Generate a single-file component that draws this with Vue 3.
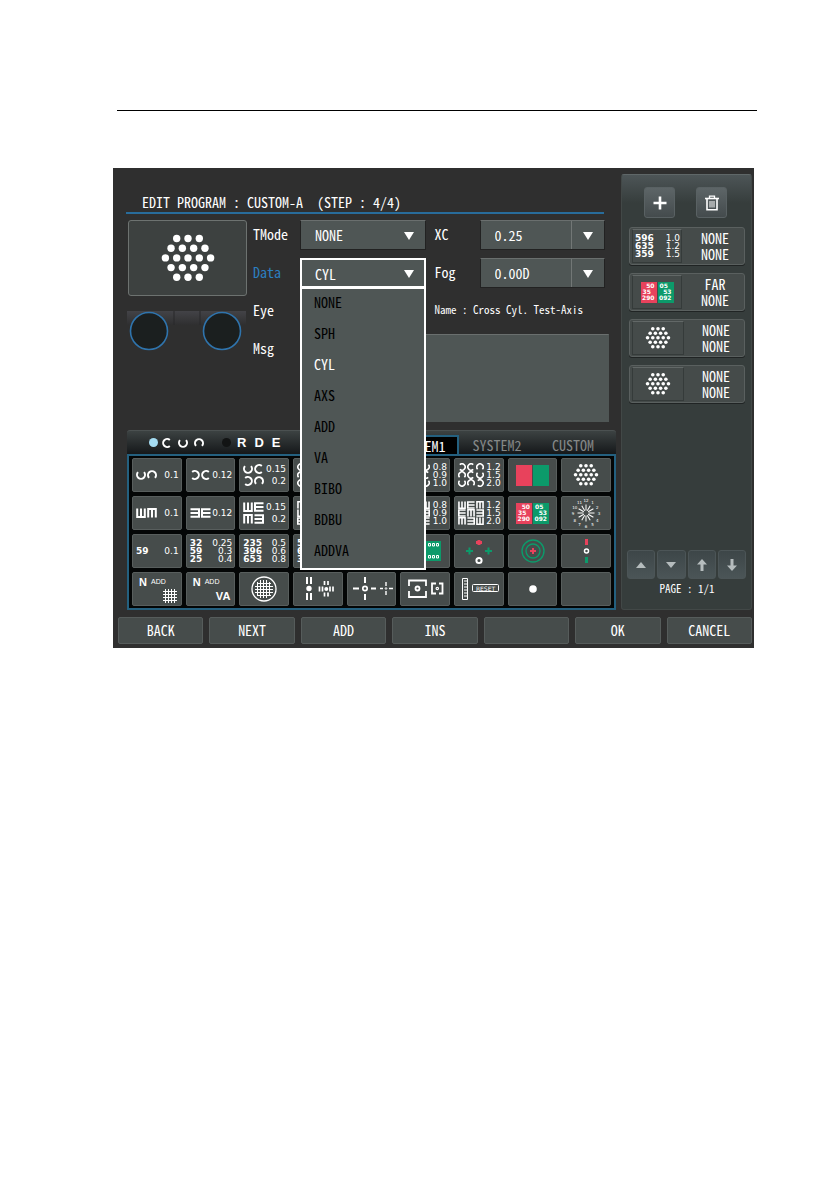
<template>
  <div class="page">
    <hr class="page-rule" />
    <main class="device">
      <div class="device-body">
        <section class="editor">
          <h1 class="title">EDIT PROGRAM : CUSTOM-A&nbsp; (STEP : 4/4)</h1>

          <div class="setup">
            <div class="preview-col">
              <div class="preview">
                <svg viewBox="0 0 54 48" class="preview-dots" aria-hidden="true">
                  <circle v-for="(d, i) in dots" :key="i" :cx="d.x" :cy="d.y" r="3.7" fill="#fff" />
                </svg>
              </div>
              <svg class="lenses" viewBox="0 0 120 42" aria-hidden="true">
                <defs>
                  <linearGradient id="band" x1="0" y1="0" x2="0" y2="1">
                    <stop offset="0" stop-color="#434347" />
                    <stop offset="1" stop-color="#2f2f30" />
                  </linearGradient>
                </defs>
                <rect x="0" y="1" width="119" height="14" fill="url(#band)" />
                <path d="M47 1v14M73 1v14" stroke="#29292a" />
                <circle cx="22" cy="21" r="18.5" fill="#1b1f1f" stroke="#2f74ad" stroke-width="1.6" />
                <circle cx="95" cy="21" r="18.5" fill="#1b1f1f" stroke="#2f74ad" stroke-width="1.6" />
              </svg>
            </div>

            <form class="fields" @submit.prevent>
              <label for="tmode">TMode</label>
              <div class="combo">
                <select id="tmode" v-model="tmode">
                  <option>NONE</option>
                </select>
                <svg class="caret" viewBox="0 0 10 8"><path d="M0 0h10L5 8z" /></svg>
              </div>
              <label for="xc" class="second">XC</label>
              <div class="combo split">
                <select id="xc" v-model="xc">
                  <option>0.25</option>
                </select>
                <svg class="caret" viewBox="0 0 10 8"><path d="M0 0h10L5 8z" /></svg>
              </div>

              <label for="data" class="current">Data</label>
              <div class="combo open">
                <select id="data" v-model="dataField">
                  <option v-for="o in dataOptions" :key="o">{{ o }}</option>
                </select>
                <svg class="caret" viewBox="0 0 10 8"><path d="M0 0h10L5 8z" /></svg>
                <ul class="options" role="listbox" aria-label="Data">
                  <li
                    v-for="o in dataOptions"
                    :key="o"
                    role="option"
                    :aria-selected="o === dataField"
                    :class="{ selected: o === dataField }"
                    @click="dataField = o"
                  >
                    {{ o }}
                  </li>
                </ul>
              </div>
              <label for="fog" class="second">Fog</label>
              <div class="combo split">
                <select id="fog" v-model="fog">
                  <option>0.00D</option>
                </select>
                <svg class="caret" viewBox="0 0 10 8"><path d="M0 0h10L5 8z" /></svg>
              </div>

              <span class="field-name">Eye</span>
              <p class="test-name">Name : Cross Cyl. Test-Axis</p>

              <label for="msg" class="msg-label">Msg</label>
              <textarea id="msg" v-model="message"></textarea>
            </form>
          </div>

          <div class="tabs">
            <div class="modes">
              <label class="mode">
                <input v-model="mode" type="radio" name="mode" value="landolt" aria-label="Landolt" />
                <svg
                  v-for="g in ['r', 'u', 'd']"
                  :key="g"
                  class="mode-glyph"
                  viewBox="0 0 10 10"
                  aria-hidden="true"
                >
                  <path :d="ringPath" :transform="turn(g)" class="ring" />
                </svg>
              </label>
              <label class="mode letters">
                <input v-model="mode" type="radio" name="mode" value="letters" />
                <span>R</span><span>D</span><span>E</span>
              </label>
            </div>
            <button
              v-for="t in tabs"
              :key="t"
              type="button"
              class="tab"
              :class="{ active: t === activeTab }"
              @click="activeTab = t"
            >
              {{ t }}
            </button>
          </div>

          <div class="charts">
            <button v-for="(c, i) in charts" :key="i" type="button" class="chart">
              <span v-if="c.rows" class="lines" :class="'lines-' + c.rows.length">
                <span v-for="(r, j) in c.rows" :key="j" class="line">
                  <b v-if="c.set === 'num'">{{ r[0] }}</b>
                  <span v-else class="glyphs">
                    <svg v-for="(g, k) in r[0]" :key="k" viewBox="0 0 10 10" aria-hidden="true">
                      <path
                        :d="c.set === 'ring' ? ringPath : forkPath"
                        :transform="turn(g)"
                        class="ring"
                      />
                    </svg>
                  </span>
                  <span v-if="r[1]" class="acuity">{{ r[1] }}</span>
                </span>
              </span>

              <span v-else-if="c.kind === 'near-grid' || c.kind === 'near-va'" class="near">
                <b>N</b><small>ADD</small>
                <svg v-if="c.kind === 'near-grid'" class="near-mark" viewBox="0 0 14 14">
                  <path d="M2.500 0v14M5.500 0v14M8.500 0v14M11.500 0v14M0 2.500h14M0 5.500h14M0 8.500h14M0 11.500h14" stroke="#fff" />
                </svg>
                <b v-else class="near-mark va">VA</b>
              </span>

              <svg v-else-if="c.kind === 'dots'" class="art" viewBox="-27 -12 108 73">
                <circle v-for="(d, k) in dots" :key="k" :cx="d.x" :cy="d.y" r="3.9" fill="#fff" />
              </svg>

              <span v-else-if="c.kind === 'duo' || c.kind === 'duo-num'" class="duo">
                <span class="red"><i v-for="n in c.left" :key="n">{{ n }}</i></span>
                <span class="green"><i v-for="n in c.right" :key="n">{{ n }}</i></span>
              </span>

              <svg v-else-if="c.kind" class="art" viewBox="0 0 50 34">
                <g v-if="c.kind === 'clock'" stroke="#fff" fill="none">
                  <path
                    v-for="n in 12"
                    :key="n"
                    d="M25 8.500V14.500"
                    :transform="`rotate(${n * 30} 25 17)`"
                    stroke-width="1"
                  />
                  <text
                    v-for="n in 12"
                    :key="'t' + n"
                    :x="25 + 13 * Math.sin((n * Math.PI) / 6)"
                    :y="19 - 13 * Math.cos((n * Math.PI) / 6)"
                    class="hour"
                  >
                    {{ n }}
                  </text>
                </g>
                <g v-else-if="c.kind === 'duo-rows'">
                  <path d="M8 7h33v20H8z" fill="#0c9a6a" />
                  <path d="M8 7h16v20H8z" fill="#e8425c" />
                  <g fill="none" stroke="#fff">
                    <path d="M28.500 9.500h2v2.500h-2zM32.500 9.500h2v2.500h-2zM36.500 9.500h2v2.500h-2z" />
                    <path d="M28.500 21.500h2v2.500h-2zM32.500 21.500h2v2.500h-2zM36.500 21.500h2v2.500h-2z" />
                  </g>
                </g>
                <g v-else-if="c.kind === 'worth'">
                  <path d="M22 8.500h6M25 6v5" stroke="#e8425c" stroke-width="3" />
                  <path d="M12 17h7M15.500 13.500v7M31 17h7M34.500 13.500v7" stroke="#0c9a6a" stroke-width="2" />
                  <circle cx="25" cy="26.500" r="2.600" fill="none" stroke="#fff" stroke-width="2" />
                </g>
                <g v-else-if="c.kind === 'rings'" fill="none" stroke="#0c9a6a" stroke-width="1.400">
                  <circle cx="25" cy="17" r="11" />
                  <circle cx="25" cy="17" r="7" />
                  <path d="M22 17h6M25 14v6" stroke="#e8425c" stroke-width="2" />
                </g>
                <g v-else-if="c.kind === 'column'">
                  <path d="M25.500 5v6" stroke="#e8425c" stroke-width="3" />
                  <circle cx="25.500" cy="17" r="2" fill="none" stroke="#fff" stroke-width="1.500" />
                  <path d="M25.500 23v6" stroke="#0c9a6a" stroke-width="3" />
                </g>
                <g v-else-if="c.kind === 'amsler'" fill="none" stroke="#fff">
                  <circle cx="25" cy="17" r="12" stroke-width="1.300" />
                  <path
                    d="M18.500 10v14M21.500 8v18M24.500 8v18M27.500 8v18M30.500 10v14M18 11.500h14M16 14.500h18M16 17.500h18M16 20.500h18M18 23.500h14"
                    stroke-width="1"
                  />
                </g>
                <g v-else-if="c.kind === 'aniso'" stroke="#fff" stroke-width="2">
                  <path d="M14 5v7M18 5v7M14 21v7M18 21v7" />
                  <circle cx="16" cy="16.500" r="2.700" fill="#fff" stroke="none" />
                  <path
                    d="M26.500 14.500v5M29.500 14.500v5M37 14.500v5M40 14.500v5M31.500 9v4M35 9v4M31.500 20.500v4M35 20.500v4"
                    stroke-width="1.700"
                  />
                  <circle cx="33.300" cy="17" r="2" fill="#fff" stroke="none" />
                </g>
                <g v-else-if="c.kind === 'cross'" fill="none" stroke="#fff" stroke-width="2">
                  <path d="M6 16.500h6M24 16.500h5M18 5v6M18 22v6" />
                  <circle cx="18" cy="16.500" r="2.200" stroke-width="1.700" />
                  <path d="M33 16.500h3M42 16.500h4M39 10v4M39 19v4" stroke-width="1.400" />
                  <circle cx="39" cy="16.500" r=".8" stroke-width="1" />
                </g>
                <g v-else-if="c.kind === 'brackets'" fill="none" stroke="#fff" stroke-width="1.800">
                  <path d="M9 14V8.500H26V14M9 19v6h17v-6" />
                  <circle cx="17.500" cy="16.500" r="2" />
                  <path d="M36 11.500h-4v10h4M39 11.500h3.500v10H39" />
                  <circle cx="37.300" cy="16.500" r="1.200" stroke-width="1.200" />
                </g>
                <g v-else-if="c.kind === 'reset'" fill="none" stroke="#fff">
                  <path d="M8.500 6.500h5v21h-5z" />
                  <path d="M10 9h3M10 12h3M10 15h3M10 18h3M10 21h3M10 24h3" />
                  <rect x="18.500" y="12.500" width="26" height="7" rx="1" />
                  <text x="31.500" y="18.500" class="reset-text">RESET</text>
                </g>
                <circle v-else-if="c.kind === 'spot'" cx="25" cy="17" r="3.800" fill="#fff" />
              </svg>
            </button>
          </div>
        </section>

        <aside class="steps">
          <div class="step-tools">
            <button type="button" aria-label="Add step">
              <svg viewBox="0 0 16 16"><path d="M8 1.500v13M1.500 8h13" stroke="#fff" stroke-width="2.600" /></svg>
            </button>
            <button type="button" aria-label="Delete step">
              <svg viewBox="0 0 16 16" fill="none" stroke="#fff">
                <path d="M1 3.500h14" stroke-width="1.600" />
                <path d="M5.500 3V1.200h5V3" stroke-width="1.300" />
                <path d="M3 4v10.800h10V4" stroke-width="1.600" />
                <path d="M6 6v6.500M8 6v6.500M10 6v6.500" />
              </svg>
            </button>
          </div>

          <button v-for="(s, i) in steps" :key="i" type="button" class="step">
            <span class="thumb">
              <span v-if="s.kind === 'numbers'" class="lines lines-3">
                <span v-for="r in s.rows" :key="r[0]" class="line">
                  <b>{{ r[0] }}</b><span class="acuity">{{ r[1] }}</span>
                </span>
              </span>
              <span v-else-if="s.kind === 'duo-num'" class="duo">
                <span class="red"><i v-for="n in s.left" :key="n">{{ n }}</i></span>
                <span class="green"><i v-for="n in s.right" :key="n">{{ n }}</i></span>
              </span>
              <svg v-else class="art" viewBox="-27 -12 108 73">
                <circle v-for="(d, k) in dots" :key="k" :cx="d.x" :cy="d.y" r="3.9" fill="#fff" />
              </svg>
            </span>
            <span class="step-text">{{ s.top }}<br />{{ s.bottom }}</span>
          </button>

          <div class="pager">
            <button type="button" aria-label="Previous page">
              <svg viewBox="0 0 12 12"><path d="M1 9l5-6 5 6z" /></svg>
            </button>
            <button type="button" aria-label="Next page">
              <svg viewBox="0 0 12 12"><path d="M1 3h10L6 9z" /></svg>
            </button>
            <button type="button" aria-label="Move up">
              <svg viewBox="0 0 12 12"><path d="M6 0l5 5.500H7.500V12h-3V5.500H1z" /></svg>
            </button>
            <button type="button" aria-label="Move down">
              <svg viewBox="0 0 12 12"><path d="M6 12l5-5.500H7.500V0h-3v6.500H1z" /></svg>
            </button>
          </div>
          <p class="page-no">PAGE : 1/1</p>
        </aside>
      </div>

      <footer class="actions">
        <button v-for="(a, i) in actions" :key="i" type="button">{{ a }}</button>
      </footer>
    </main>
  </div>
</template>

<script setup>
import { ref } from 'vue'

const tmode = ref('NONE')
const xc = ref('0.25')
const fog = ref('0.00D')
const dataField = ref('CYL')
const message = ref('')
const mode = ref('landolt')
const activeTab = ref('SYSTEM1')

const dataOptions = ['NONE', 'SPH', 'CYL', 'AXS', 'ADD', 'VA', 'BIBO', 'BDBU', 'ADDVA']
const tabs = ['SYSTEM1', 'SYSTEM2', 'CUSTOM']
const actions = ['BACK', 'NEXT', 'ADD', 'INS', '', 'OK', 'CANCEL']

// hexagonal dot target, 3-4-5-4-3
const dots = [3, 4, 5, 4, 3].flatMap((count, row) =>
  Array.from({ length: count }, (_, i) => ({
    x: 27 + (i - (count - 1) / 2) * 11.3,
    y: 4.5 + row * 9.7,
  })),
)

// optotypes are drawn opening to the right and turned from there
const ringPath = 'M7.8 2A4 4 0 1 0 7.8 8'
const forkPath = 'M9.500 1.200H1V8.800H9.500M1 5H9.500'
const angles = { r: 0, d: 90, l: 180, u: 270 }

function turn(direction) {
  return `rotate(${angles[direction]} 5 5)`
}

const duoLeft = ['50', '35', '290']
const duoRight = ['05', '53', '092']

const charts = [
  { set: 'ring', rows: [['ud', '0.1']] },
  { set: 'ring', rows: [['lr', '0.12']] },
  { set: 'ring', rows: [['ur', '0.15'], ['ld', '0.2']] },
  { set: 'ring', rows: [['rud'], ['dlr'], ['ruu']] },
  {},
  { set: 'ring', rows: [['rdu', '0.8'], ['udr', '0.9'], ['dlu', '1.0']] },
  { set: 'ring', rows: [['lrd', '1.2'], ['dru', '1.5'], ['udl', '2.0']] },
  { kind: 'duo' },
  { kind: 'dots' },

  { set: 'fork', rows: [['ud', '0.1']] },
  { set: 'fork', rows: [['lr', '0.12']] },
  { set: 'fork', rows: [['ur', '0.15'], ['dl', '0.2']] },
  { set: 'fork', rows: [['drl'], ['uld'], ['rdu']] },
  {},
  { set: 'fork', rows: [['dru', '0.8'], ['udl', '0.9'], ['ldr', '1.0']] },
  { set: 'fork', rows: [['urd', '1.2'], ['rdl', '1.5'], ['dlu', '2.0']] },
  { kind: 'duo-num', left: duoLeft, right: duoRight },
  { kind: 'clock' },

  { set: 'num', rows: [['59', '0.1']] },
  { set: 'num', rows: [['32', '0.25'], ['59', '0.3'], ['25', '0.4']] },
  { set: 'num', rows: [['235', '0.5'], ['396', '0.6'], ['653', '0.8']] },
  { set: 'num', rows: [['5'], ['6'], ['3']] },
  {},
  { kind: 'duo-rows' },
  { kind: 'worth' },
  { kind: 'rings' },
  { kind: 'column' },

  { kind: 'near-grid' },
  { kind: 'near-va' },
  { kind: 'amsler' },
  { kind: 'aniso' },
  { kind: 'cross' },
  { kind: 'brackets' },
  { kind: 'reset' },
  { kind: 'spot' },
  {},
]

const steps = [
  {
    kind: 'numbers',
    rows: [['596', '1.0'], ['635', '1.2'], ['359', '1.5']],
    top: 'NONE',
    bottom: 'NONE',
  },
  { kind: 'duo-num', left: duoLeft, right: duoRight, top: 'FAR', bottom: 'NONE' },
  { kind: 'dots', top: 'NONE', bottom: 'NONE' },
  { kind: 'dots', top: 'NONE', bottom: 'NONE' },
]
</script>

<style>
body {
  margin: 0;
  background: #fff;
}
</style>

<style scoped>
* {
  box-sizing: border-box;
}

.page {
  padding: 110px 85px 40px 113px;
  font-family: 'Noto Sans Mono CJK JP', 'Liberation Mono', monospace;
  font-size: 14px;
  color: #fff;
}

button,
select,
textarea {
  font: inherit;
  color: inherit;
}

button {
  padding: 0;
  cursor: pointer;
}

.page-rule {
  height: 1px;
  margin: 0 -3px 57px 4px;
  border: 0;
  background: #000;
}

.device {
  padding: 6px 2px 4px 0;
  background: #2f2f2f;
}

.device-body {
  display: flex;
}

.editor {
  flex: 1;
  min-width: 0;
  padding: 18px 5px 0 14px;
}

.title {
  margin: 0 12px 6px -1px;
  padding-left: 16px;
  border-bottom: 2px solid #286c9b;
  font-size: 14px;
  font-weight: 400;
  line-height: 20px;
  white-space: nowrap;
}

.setup {
  display: flex;
  gap: 6px;
  padding: 0 11px 0 1px;
}

.preview-col {
  flex: 0 0 118px;
}

.preview {
  display: flex;
  align-items: center;
  justify-content: center;
  height: 76px;
  border: 1px solid #6d7270;
  border-radius: 3px;
  background: #3d4140;
}

.preview-dots {
  width: 54px;
  height: 48px;
}

.lenses {
  display: block;
  width: 120px;
  height: 42px;
  margin: 14px 0 0 -1px;
}

.fields {
  flex: 1;
  display: grid;
  grid-template-columns: 47px 1fr 54px 1fr;
  grid-template-rows: 30px 30px 30px 88px;
  row-gap: 8px;
  line-height: 28px;
}

.current {
  color: #2c7fc0;
}

.second {
  padding-left: 9px;
}

.combo {
  position: relative;
  min-width: 0;
}

.combo select {
  display: block;
  width: 100%;
  height: 30px;
  padding: 0 14px 3px;
  border: 1px solid #222;
  border-top-color: #6a6f6e;
  border-radius: 0;
  background: #4f5655;
  appearance: none;
}

.combo.open select {
  border: 2px solid #fff;
  padding: 0 13px 3px;
}

.caret {
  position: absolute;
  top: 12px;
  right: 12px;
  width: 10px;
  height: 8px;
  fill: #fff;
  pointer-events: none;
}

.split::after {
  content: '';
  position: absolute;
  top: 1px;
  right: 33px;
  width: 1px;
  height: 28px;
  background: #727776;
}

.options {
  position: absolute;
  top: 29px;
  left: 0;
  z-index: 5;
  width: 100%;
  margin: 0;
  padding: 0;
  border: 2px solid #fff;
  background: #4f5655;
  color: #000;
  list-style: none;
}

.options li {
  height: 31px;
  padding-left: 12px;
  line-height: 27px;
  cursor: pointer;
}

.options .selected {
  color: #fff;
}

.field-name {
  grid-column: 1;
}

.test-name {
  grid-column: 3 / 5;
  margin: 0;
  padding-left: 9px;
  font-size: 11px;
  line-height: 26px;
  white-space: nowrap;
}

textarea {
  grid-column: 2 / 5;
  margin-right: -4px;
  padding: 8px;
  border: 1px solid #4f5655;
  border-top-color: #6a6f6e;
  background: #4f5655;
  line-height: 20px;
  resize: none;
}

.tabs {
  display: flex;
  align-items: flex-end;
  height: 24px;
  margin-top: 8px;
  padding-right: 5px;
  border-top: 1px solid #4b5151;
  border-radius: 3px 3px 0 0;
  background: linear-gradient(#3c4242, #15181a);
}

.modes {
  flex: 1;
  display: flex;
  gap: 18px;
  padding-left: 22px;
}

.mode {
  display: flex;
  align-items: center;
  gap: 6px;
  height: 23px;
}

.letters {
  gap: 8px;
  font-family: 'Liberation Sans', Arial, sans-serif;
  font-size: 13px;
  font-weight: 700;
}

.mode input {
  width: 9px;
  height: 9px;
  margin: 0 -2px 0 0;
  border-radius: 50%;
  background: #121414;
  appearance: none;
}

.mode input:checked {
  background: #a4dcf2;
}

.mode-glyph {
  width: 10px;
  height: 10px;
}

.ring {
  fill: none;
  stroke: #fff;
  stroke-width: 2;
}

.tab {
  width: 76px;
  height: 19px;
  border: 0;
  background: none;
  color: #858888;
  line-height: 16px;
}

.tab.active {
  border: 2px solid #24607f;
  border-bottom: 0;
  background: #000;
  color: #fff;
  line-height: 14px;
}

.charts {
  display: grid;
  grid-template-columns: repeat(9, minmax(0, 1fr));
  grid-auto-rows: 34px;
  gap: 4px;
  padding: 2px 3px;
  border: 2px solid #24607f;
  background: #040606;
}

.chart {
  display: flex;
  align-items: center;
  justify-content: center;
  border: 1px solid #585e5d;
  border-radius: 2px;
  background: #464c4b;
  overflow: hidden;
}

.art {
  flex: none;
  width: 50px;
  height: 34px;
}

.lines {
  flex: 1;
  display: flex;
  flex-direction: column;
  gap: 4px;
  padding: 0 2px 0 3px;
  font-family: 'DejaVu Sans', sans-serif;
  font-size: 9px;
  line-height: 8px;
}

.lines-3 {
  gap: 0;
}

.line {
  display: flex;
  align-items: center;
  justify-content: space-between;
}

.glyphs {
  display: flex;
  gap: 1px;
}

.glyphs svg {
  width: 10px;
  height: 10px;
}

.lines-2 {
  gap: 2px;
}

.lines-3 .glyphs svg {
  width: 8px;
  height: 8px;
}

.near {
  flex: 1;
  display: grid;
  grid-template-columns: 12px 1fr;
  align-items: center;
  padding: 0 4px 0 6px;
  font-family: 'Liberation Sans', Arial, sans-serif;
  font-size: 11px;
  line-height: 14px;
  text-align: left;
}

.near small {
  font-size: 7px;
}

.near-mark {
  grid-column: 2;
  justify-self: end;
  width: 14px;
  height: 14px;
}

.near .va {
  width: auto;
}

.duo {
  display: flex;
  gap: 1px;
  font-family: 'DejaVu Sans', sans-serif;
  font-size: 6px;
  font-weight: 700;
  line-height: 6px;
}

.duo span {
  display: flex;
  flex-direction: column;
  align-items: flex-end;
  justify-content: center;
  width: 16px;
  height: 21px;
  padding: 0 2px;
}

.duo i {
  font-style: normal;
}

.red i:nth-child(2),
.green i:first-child {
  align-self: flex-start;
}

.duo .red {
  background: #e8425c;
}

.duo .green {
  background: #0c9a6a;
}

.hour,
.reset-text {
  fill: #fff;
  stroke: none;
  font-family: 'DejaVu Sans', sans-serif;
  font-size: 4px;
  text-anchor: middle;
}

.reset-text {
  font-size: 6px;
}

.steps {
  flex: 0 0 131px;
  display: flex;
  flex-direction: column;
  gap: 8px;
  padding: 12px 6px 14px 7px;
  border: 1px solid #424847;
  border-top-color: #5f6768;
  border-radius: 3px;
  background: linear-gradient(#4d5557, #363d3c 28px);
}

.step-tools {
  display: flex;
  justify-content: space-between;
  margin-bottom: 1px;
  padding: 0 18px 0 15px;
}

.step-tools button,
.pager button {
  display: flex;
  align-items: center;
  justify-content: center;
  border: 1px solid #596163;
  border-radius: 3px;
  background: linear-gradient(#5d6567, #444b4d);
}

.step-tools button {
  width: 31px;
  height: 31px;
}

.step-tools svg {
  width: 16px;
  height: 16px;
}

.step {
  display: flex;
  align-items: center;
  height: 38px;
  padding: 0 2px;
  border: 1px solid #5a605f;
  border-radius: 3px;
  background: #454b4a;
  box-shadow: 0 1px 0 #202424;
}

.thumb {
  flex: 0 0 50px;
  display: flex;
  align-items: center;
  justify-content: center;
  height: 34px;
  border: 1px solid #353b3a;
  border-top-color: #626867;
}

.thumb .lines {
  padding: 0 1px 0 2px;
}

.step-text {
  flex: 1;
  padding-left: 6px;
  line-height: 16px;
}

.pager {
  display: flex;
  gap: 2px;
  margin: auto -1px 0 -2px;
}

.pager button {
  flex: 1;
  height: 29px;
  border-color: #4c5557;
  background: linear-gradient(#3d4648, #4b5557);
}

.pager svg {
  width: 12px;
  height: 12px;
  fill: #b5bcbd;
}

.page-no {
  margin: -6px 0 0;
  font-size: 11px;
  line-height: 14px;
  text-align: center;
}

.actions {
  display: grid;
  grid-template-columns: repeat(7, minmax(0, 1fr));
  gap: 6px;
  padding: 7px 0 0 5px;
}

.actions button {
  height: 27px;
  border: 1px solid #565c5b;
  border-radius: 2px;
  background: #464c4b;
  line-height: 25px;
}
</style>
